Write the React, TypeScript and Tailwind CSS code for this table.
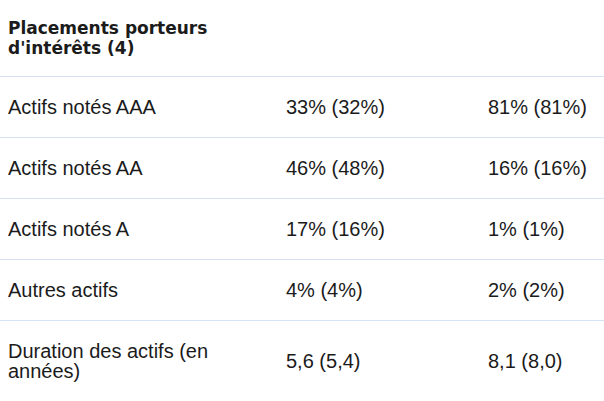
const rows = [
  { label: 'Actifs notés AAA', a: '33% (32%)', b: '81% (81%)' },
  { label: 'Actifs notés AA', a: '46% (48%)', b: '16% (16%)' },
  { label: 'Actifs notés A', a: '17% (16%)', b: '1% (1%)' },
  { label: 'Autres actifs', a: '4% (4%)', b: '2% (2%)' },
  { label: 'Duration des actifs (en années)', a: '5,6 (5,4)', b: '8,1 (8,0)' },
];

export default function App() {
  return (
    <div className="w-[604px] bg-white text-[#1b1b1b] font-['Liberation_Sans',Arial,sans-serif]">
      <div className="grid grid-cols-[278px_202px_1fr] h-[76px] items-center">
        <div className="pl-2 w-[240px] font-['DejaVu_Sans',sans-serif] font-bold text-[17px] leading-[20px]">
          Placements porteurs d'intérêts (4)
        </div>
        <div />
        <div />
      </div>
      {rows.map((r, i) => (
        <div
          key={r.label}
          className={
            'grid grid-cols-[278px_202px_1fr] items-center border-t border-[#d5e3f5] text-[20px] leading-[20px] ' +
            (i === rows.length - 1 ? 'h-[81px]' : 'h-[61px]')
          }
        >
          <div className="pl-2 pr-2">{r.label}</div>
          <div className="pl-2">{r.a}</div>
          <div className="pl-2">{r.b}</div>
        </div>
      ))}
    </div>
  );
}
